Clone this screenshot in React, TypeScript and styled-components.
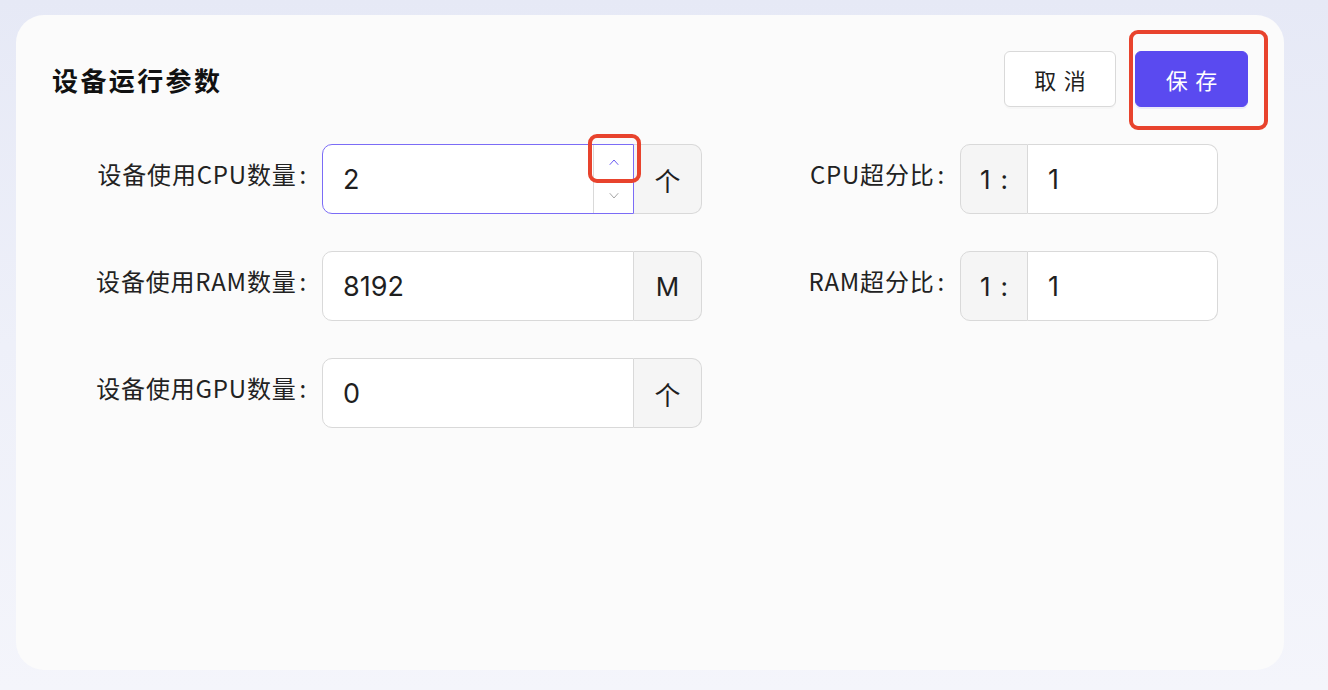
import { FunctionComponent } from "react";
import styled, { createGlobalStyle } from "styled-components";

const GlobalStyle = createGlobalStyle`
  html, body {
    margin: 0;
    padding: 0;
    height: 100%;
  }
  body {
    font-family: "Inter", "Noto Sans CJK SC", sans-serif;
    color: #1f1f1f;
  }
`;

const Page = styled.div`
  width: 100%;
  height: 690px;
  box-sizing: border-box;
  padding: 15px 44px 20px 16px;
  background: linear-gradient(180deg, #e6e9f6 0%, #eef0f9 50%, #f4f5fb 100%);
  display: flex;
`;

const Card = styled.section`
  flex: 1;
  background-color: #fbfbfb;
  border-radius: 28px;
  padding: 36px 36px 0 36px;
  box-sizing: border-box;
  display: flex;
  flex-direction: column;
  gap: 37px;
`;

const Header = styled.div`
  display: flex;
  align-items: center;
  justify-content: space-between;
  height: 56px;
`;

const Title = styled.h1`
  margin: 0;
  font-family: "Noto Sans CJK SC", sans-serif;
  font-size: 26px;
  font-weight: 700;
  letter-spacing: 2.4px;
  color: #111;
`;

const Actions = styled.div`
  display: flex;
  gap: 19px;
`;

const Button = styled.button<{ $primary?: boolean }>`
  position: relative;
  width: ${(p) => (p.$primary ? "113px" : "112px")};
  height: 56px;
  border-radius: 6px;
  font-family: "Noto Sans CJK SC", sans-serif;
  font-size: 22px;
  letter-spacing: 0.34em;
  text-indent: 0.34em;
  cursor: pointer;
  border: 1px solid ${(p) => (p.$primary ? "#5a4af0" : "#d9d9d9")};
  background: ${(p) => (p.$primary ? "#5a4af0" : "#ffffff")};
  color: ${(p) => (p.$primary ? "#ffffff" : "#1f1f1f")};
  box-shadow: 0 2px 0 ${(p) => (p.$primary ? "rgba(90, 74, 240, 0.1)" : "rgba(0, 0, 0, 0.02)")};
`;

const Highlight = styled.span<{ $top: number; $right: number; $bottom: number; $left: number }>`
  position: absolute;
  top: ${(p) => p.$top}px;
  right: ${(p) => p.$right}px;
  bottom: ${(p) => p.$bottom}px;
  left: ${(p) => p.$left}px;
  border: 4px solid #e8432d;
  border-radius: 9px;
  pointer-events: none;
  z-index: 2;
`;

const Form = styled.div`
  display: grid;
  grid-template-columns: 270px 380px 1fr 190px 258px;
  row-gap: 37px;
  padding-right: 30px;
`;

const Label = styled.label`
  display: flex;
  align-items: center;
  justify-content: flex-end;
  height: 70px;
  box-sizing: border-box;
  padding-bottom: 12px;
  font-family: "Noto Sans CJK SC", sans-serif;
  font-size: 24px;
  letter-spacing: 0.8px;
  color: #222;
  white-space: nowrap;
  &::after {
    content: ":";
    margin: 0 15px 0 3px;
  }
`;

const Spacer = styled.div``;

const Group = styled.div`
  display: flex;
  height: 70px;
`;

const Field = styled.div<{ $focused?: boolean; $hasBefore?: boolean }>`
  position: relative;
  flex: 1;
  display: flex;
  align-items: center;
  background: #ffffff;
  border: 1px solid ${(p) => (p.$focused ? "#7b6cf6" : "#d9d9d9")};
  border-radius: ${(p) => (p.$hasBefore ? "0 10px 10px 0" : "10px 0 0 10px")};
  ${(p) => (p.$hasBefore ? "border-left: none;" : "")}
  z-index: ${(p) => (p.$focused ? 1 : 0)};
`;

const Value = styled.span`
  padding-left: 20px;
  font-family: "Inter", sans-serif;
  font-size: 27px;
  color: #1f1f1f;
  flex: 1;
`;

const Addon = styled.div<{ $side: "before" | "after" }>`
  width: 68px;
  display: flex;
  align-items: center;
  justify-content: center;
  gap: 10px;
  background: #f5f5f5;
  border: 1px solid #d9d9d9;
  ${(p) =>
    p.$side === "after"
      ? "border-left: none; border-radius: 0 10px 10px 0;"
      : "border-radius: 10px 0 0 10px;"}
  font-family: "Inter", "Noto Sans CJK SC", sans-serif;
  font-size: 26px;
  color: #1f1f1f;
  box-sizing: border-box;
`;

const Stepper = styled.div`
  align-self: stretch;
  width: 39px;
  display: flex;
  flex-direction: column;
  border-left: 1px solid #d9d9d9;
`;

const StepHalf = styled.div<{ $active?: boolean }>`
  position: relative;
  flex: 1;
  display: flex;
  align-items: center;
  justify-content: center;
  color: ${(p) => (p.$active ? "#6a5cf2" : "#a6a6a6")};
  & + & {
    border-top: 1px solid #d9d9d9;
  }
`;

const Chevron: FunctionComponent<{ up?: boolean }> = ({ up }) => (
  <svg width="12" height="8" viewBox="0 0 12 8" fill="none">
    <path
      d={up ? "M2 6.5 L6 2 L10 6.5" : "M2 1.5 L6 6 L10 1.5"}
      stroke="currentColor"
      strokeWidth="1"
      strokeLinecap="round"
      strokeLinejoin="round"
    />
  </svg>
);

const App: FunctionComponent = () => {
  return (
    <>
      <GlobalStyle />
      <Page>
        <Card>
          <Header>
            <Title>设备运行参数</Title>
            <Actions>
              <Button>取消</Button>
              <Button $primary>
                保存
                <Highlight $top={-22} $right={-21} $bottom={-24} $left={-7} />
              </Button>
            </Actions>
          </Header>
          <Form>
            <Label>设备使用CPU数量</Label>
            <Group>
              <Field $focused>
                <Value>2</Value>
                <Stepper>
                  <StepHalf $active>
                    <Chevron up />
                    <Highlight $top={-11} $right={-8} $bottom={-4} $left={-6} />
                  </StepHalf>
                  <StepHalf>
                    <Chevron />
                  </StepHalf>
                </Stepper>
              </Field>
              <Addon $side="after">个</Addon>
            </Group>
            <Spacer />
            <Label>CPU超分比</Label>
            <Group>
              <Addon $side="before">
                <span>1</span>
                <span>:</span>
              </Addon>
              <Field $hasBefore>
                <Value>1</Value>
              </Field>
            </Group>

            <Label>设备使用RAM数量</Label>
            <Group>
              <Field>
                <Value>8192</Value>
              </Field>
              <Addon $side="after">M</Addon>
            </Group>
            <Spacer />
            <Label>RAM超分比</Label>
            <Group>
              <Addon $side="before">
                <span>1</span>
                <span>:</span>
              </Addon>
              <Field $hasBefore>
                <Value>1</Value>
              </Field>
            </Group>

            <Label>设备使用GPU数量</Label>
            <Group>
              <Field>
                <Value>0</Value>
              </Field>
              <Addon $side="after">个</Addon>
            </Group>
          </Form>
        </Card>
      </Page>
    </>
  );
};

export default App;
